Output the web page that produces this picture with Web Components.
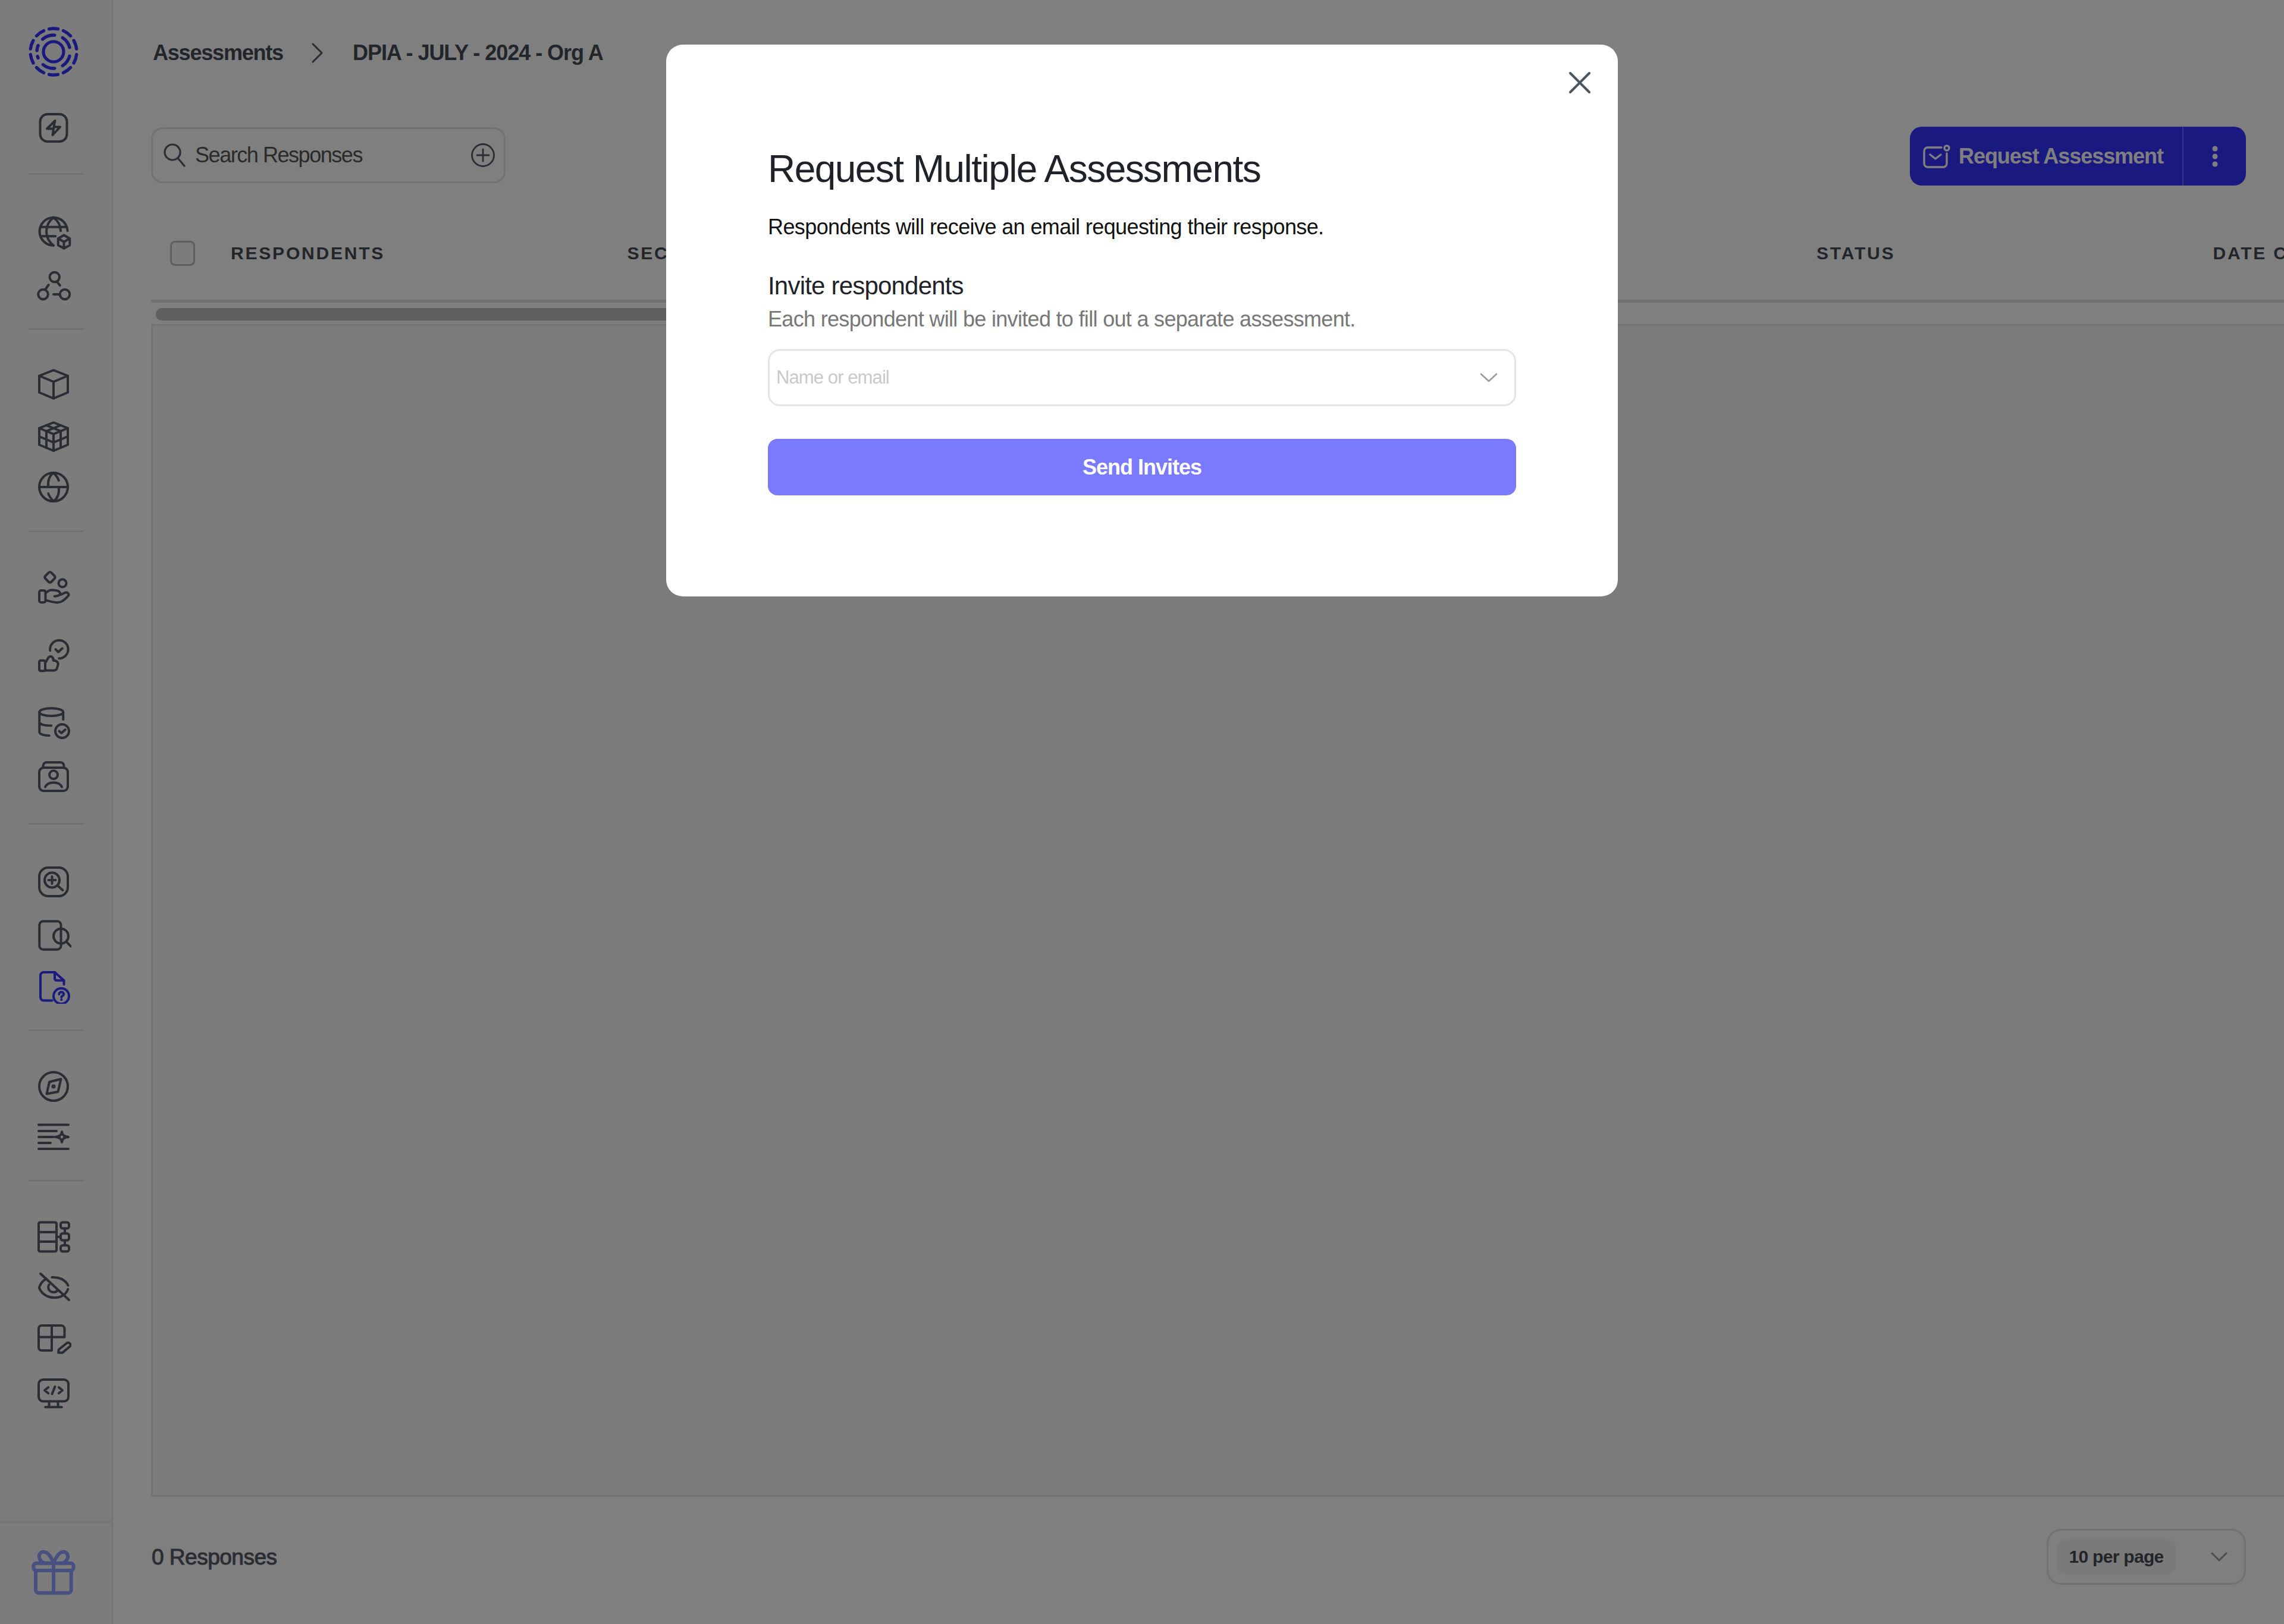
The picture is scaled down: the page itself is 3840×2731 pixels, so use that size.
<!DOCTYPE html>
<html><head><meta charset="utf-8"><title>Assessments</title>
<style>
html,body{margin:0;padding:0;background:#fff}
body{width:3840px;height:2731px;overflow:hidden;font-family:"Liberation Sans",Arial,sans-serif;color:#454a54}
</style></head><body>
<app-shell>
  <side-bar></side-bar>
  <main-pane>
    <crumb-bar></crumb-bar>
    <tool-bar></tool-bar>
    <table-head></table-head>
    <table-scroll></table-scroll>
    <table-panel></table-panel>
    <list-footer></list-footer>
  </main-pane>
</app-shell>
<modal-overlay>
  <modal-dialog></modal-dialog>
</modal-overlay>
<script>
const ICONS={
bolt:'<rect x="3" y="2.8" width="18" height="18.4" rx="5"/><path d="M13 7.2 7.6 12.6h4.4l-.6 4.2 5-5.4h-4.2z"/>',
globebox:'<path d="M21.400 11.200A9.400 9.400 0 1 0 12 21.100"/><path d="M12 2.300C8.500 5 7.200 8.300 7.200 11.700s1.300 6.700 4.800 9.400"/><path d="M12 2.300c3.500 2.700 4.800 6 4.800 9"/><path d="M3.300 8.700h17.400M3.300 14.900h10"/><path d="M19 14.200l3.900 2.200v4.500L19 23.100l-3.900-2.200v-4.500zM15.100 16.400 19 18.700l3.900-2.300M19 18.700v4.400"/>',
nodes:'<circle cx="12.700" cy="6" r="3.300"/><circle cx="5" cy="17.600" r="3.300"/><circle cx="19.600" cy="17.600" r="3.300"/><path d="M14.700 9.600l1.600 2M6.700 14l2-2.800M12 17.600h3.700"/>',
cube:'<path d="M12 2.600 21.600 6.400v11.200L12 21.600 2.400 17.600V6.400z"/><path d="M2.400 6.400 12 10.400l9.600-4M12 10.400v11.200"/>',
cubes:'<path d="M12 2.600 21.600 6.400v11.200L12 21.600 2.400 17.600V6.400z"/><path d="M2.400 6.400 12 10.400l9.600-4M12 10.400v11.200M7.200 4.500l9.600 3.900M16.800 4.500 7.200 8.400M2.400 12 12 16l9.600-4M7.200 8.400v11.200M16.800 8.400v11.200"/>',
globe2:'<circle cx="12" cy="12" r="9.600"/><path d="M2.400 12h19.200M12 2.400c-3 2.200-4 5.600-3.500 9.600M12 2.400c2 2 3 3.600 3.500 5.200M12 21.600c3-2.200 4-5.600 3.500-9.600M12 21.600c-2-2-3-3.600-3.500-5.200"/>',
hands:'<rect x="2.400" y="14.400" width="4.200" height="8" rx="1.200"/><path d="M6.700 16c1.500-1.200 2.500-1.900 4-1.900 2 0 4 .3 5 1 1 .8 1 2-.2 2.600-.8.4-1.800.6-2.800.6"/><path d="M6.700 21c2.500.5 5 1.500 8 1.500 3 0 5.500-2.500 7.200-4.500.8-1-.3-2.600-2-2.200l-3.200 1.500"/><path d="M8.600 2.500c.6-.6 1.400-.6 2 0l2 2c.6.6.6 1.400 0 2l-2 2c-.6.6-1.400.6-2 0l-2-2c-.6-.6-.6-1.400 0-2z"/><circle cx="18" cy="9.500" r="2.600"/>',
thumb:'<rect x="2.400" y="15.500" width="4" height="7" rx="1"/><path d="M6.400 17c1.200-1 1.500-3.300 2.800-4.100 1.500-.6 3 .8 2.600 2.600 1.500 0 3.300.4 3.300 2.600l-.8 2.600c-.3 1-1 1.500-2 1.500H6.400"/><path d="M9.700 8.800A6.100 6.100 0 1 1 15.700 14.100"/><path d="M13.400 8l1.800 1.800 2.700-2.500"/>',
db:'<ellipse cx="10.500" cy="5" rx="8" ry="2.600"/><path d="M2.500 5v13.400c0 1.400 3 2.400 6.600 2.400M2.500 11.600c0 1.500 3 2.500 8 2.500M18.500 5v5"/><circle cx="17.800" cy="17.800" r="4.600"/><path d="M15.800 17.800l1.500 1.300 2.600-2.300"/>',
contact:'<rect x="2.400" y="6" width="19.200" height="15.600" rx="3"/><path d="M5 6V5c0-1.600 1-2.600 2.500-2.600h9C18 2.400 19 3.400 19 5v1"/><circle cx="12" cy="10.800" r="2.800"/><path d="M6.400 19c1-2.400 3-3 5.600-3s4.600.6 5.600 3"/>',
zoomp:'<rect x="2.400" y="2.400" width="19.200" height="19.200" rx="6"/><circle cx="11" cy="10.800" r="5"/><path d="M11 8.400v4.800M8.600 10.800h4.800M14.800 14.600l3.400 3"/>',
docsearch:'<path d="M17 7.400V5a2.500 2.500 0 0 0-2.500-2.500H5A2.500 2.500 0 0 0 2.500 5v14A2.500 2.500 0 0 0 5 21.500h9.500A2.500 2.500 0 0 0 17 19v-1.600"/><circle cx="17" cy="12.500" r="5"/><path d="M17 7.500v10M20.600 16.200l3 3.200"/>',
docq:'<path d="M11 21.800H5.500c-1.500 0-2.300-1-2.300-2.300V5.100c0-1.300.8-2.300 2.300-2.300h7.300L19 8.300v2.700"/><path d="M12.800 2.800v4c0 1 .5 1.500 1.500 1.500H19"/><circle cx="17.200" cy="18.800" r="5.200"/><path d="M15.700 17.600c0-2 3.200-2 3.200 0 0 1-1.600 1-1.600 2M17.300 21.200v.1"/>',
compass:'<circle cx="12" cy="12" r="9.600"/><path d="M9.200 9 17 7l-2 8.600L7.400 17z"/><circle cx="12" cy="12" r=".6"/>',
list:'<path d="M2 3.800h20M2 8h12M2 12h10M2 16h8M2 20h20"/><path d="M17.600 8.500c.3 2.200 1.300 3.200 4.400 3.500-3.100.3-4.100 1.300-4.400 3.500-.3-2.200-1.300-3.200-4.400-3.500 3.100-.3 4.100-1.300 4.400-3.500z"/>',
dbtree:'<rect x="2" y="2.200" width="12" height="19.600" rx="1"/><path d="M2 8.800h12M2 15.200h12M14 12h2.800"/><rect x="16.800" y="2.200" width="5.600" height="4.100" rx="1.400"/><rect x="16.800" y="9.700" width="5.600" height="4.600" rx="1.400"/><rect x="16.800" y="17.700" width="5.600" height="4.100" rx="1.400"/><path d="M19.600 6.300v3.400M19.600 14.300v3.400"/>',
eyeoff:'<path d="M7 7C4.500 8.500 3 10.500 2.300 13c3.500 9 17 8.500 19.400 1M11 6c4.500-.3 9 1.500 10.800 5.500"/><path d="M9 11c-1.500 2.500.5 5 3 5 1 0 2-.3 2.500-1"/><path d="M3.200 3.500 22.400 21.200"/>',
tablepen:'<path d="M2 10.600V4.800a2 2 0 0 1 2-2h13a2.400 2.400 0 0 1 2.400 2.400v5.400zM2 10.600v7a2 2 0 0 0 2 2h6.800V2.800"/><path d="M15.500 19 21 14.600c.8-.5 1.500-.3 2.200.5.6.8.3 1.300-.2 1.800l-5 4.200h-2.800z"/>',
monitor:'<rect x="2" y="2.800" width="20" height="14.600" rx="3"/><path d="M9 17.500v3.500M15 17.500v3.500M6.500 21.300h11M8.500 8 6 10l2.500 2M15.500 8 18 10l-2.500 2M13 7.500 11 12.500"/>'
};
function svg(n,size,color,sw){return `<svg xmlns="http://www.w3.org/2000/svg" width="${size}" height="${size}" viewBox="0 0 24 24" fill="none" stroke="${color}" stroke-width="${sw||1.6}" stroke-linecap="round" stroke-linejoin="round">${ICONS[n]}</svg>`}
function arc(r,a1,a2){const c=42,p=a=>[(c+r*Math.cos(a*Math.PI/180)).toFixed(2),(c-r*Math.sin(a*Math.PI/180)).toFixed(2)];const [x1,y1]=p(a1),[x2,y2]=p(a2);return `M${x1} ${y1}A${r} ${r} 0 0 1 ${x2} ${y2}`}
const logoPaths=[];
for(let i=0;i<10;i++){const m=90-36*i;logoPaths.push(arc(39,m+11,m-11))}
[[131,86],[57,15],[-15,-57],[-86,-129],[-158,-164],[176,158]].forEach(([a,b])=>{
  logoPaths.push(arc(28,a,b))
});
class Base extends HTMLElement{
  constructor(){super();this.attachShadow({mode:'open'}).innerHTML=this.constructor.html}
}
function def(name,html){customElements.define(name,class extends Base{static get html(){return html}})}

def('app-shell',`<style>:host{display:flex;width:3840px;height:2731px;overflow:hidden}</style><slot></slot>`);

customElements.define('nav-icon',class extends HTMLElement{
  constructor(){super();const s=this.attachShadow({mode:'open'});
    const c=this.getAttribute('color')||'#555a66';
    s.innerHTML=`<style>:host{display:flex;width:60px;height:60px;margin-left:60px;flex:none}svg{display:block}</style>`+svg(this.getAttribute('name'),60,c);
  }
});
customElements.define('nav-rule',class extends HTMLElement{
  constructor(){super();this.attachShadow({mode:'open'}).innerHTML=`<style>:host{display:block;width:93px;height:3px;margin-left:48px;background:#e2e2e2;flex:none}</style>`}
});

const G=(n,m,c)=>`<nav-icon name="${n}" style="margin-top:${m}px"${c?` color="${c}"`:''}></nav-icon>`;
const R=m=>`<nav-rule style="margin-top:${m}px"></nav-rule>`;
def('side-bar',`<style>
:host{display:flex;flex-direction:column;width:190px;height:2731px;box-sizing:border-box;background:#f9f9f9;border-right:3px solid #ececec;flex:none;padding-top:45px}
.logo{margin-left:48px;width:84px;height:84px;display:block;flex:none}
.foot{margin-top:auto;height:173px;box-sizing:border-box;border-top:3px solid #eaeaea;display:flex;padding:43px 0 0 48px}
.foot svg{display:block}
</style>
<svg class="logo" viewBox="0 0 84 84" fill="none" stroke="#3333ff">
<path d="${logoPaths.join('')}" stroke-width="5.400" stroke-linecap="round"/>
<circle cx="42" cy="42" r="17" stroke-width="5.200"/>
</svg>`
+G('bolt',56)+R(46)+G('globebox',66)+G('nodes',31)+R(41)+G('cube',61)+G('cubes',28)+G('globe2',25)+R(43)
+G('hands',62)+G('thumb',55)+G('db',53)+G('contact',31)+R(48)+G('zoomp',66)+G('docsearch',30)+G('docq',25,'#3636ff')+R(43)
+G('compass',63)+G('list',25)+R(42)+G('dbtree',63)+G('eyeoff',23)+G('tablepen',29)+G('monitor',31)
+`<div class="foot"><svg width="84" height="84" viewBox="0 0 84 84" fill="none" stroke="#8ea0ff" stroke-width="6" stroke-linecap="round" stroke-linejoin="round"><rect x="8.300" y="24.700" width="67.400" height="12.300" rx="5"/><path d="M12 37v32.700a5 5 0 0 0 5 5h49.700a5 5 0 0 0 5-5V37M42 24.700v50M42 24.700C38 14 32 5.700 25 5.700 19 5.700 16 12 19 18c2 4 6 6.700 11 6.700M42 24.700C46 14 52 5.700 59 5.700c6 0 9 6.300 6 12.300-2 4-6 6.700-11 6.700"/></svg></div>`);

def('main-pane',`<style>:host{display:flex;flex-direction:column;flex:1;min-width:0;height:2731px;overflow:hidden;padding-left:64px;box-sizing:border-box}</style><slot></slot>`);

def('crumb-bar',`<style>
:host{display:flex;align-items:center;height:178px;flex:none;font:700 36px/1 "Liberation Sans",Arial,sans-serif;color:#454a54;padding-left:3px}
.a{letter-spacing:-1.200px}.b{letter-spacing:-1.030px}
svg{margin:0 48px 0 47px;display:block}
</style><span class="a">Assessments</span><svg width="22" height="34" viewBox="0 0 22 34" fill="none" stroke="#555a66" stroke-width="3" stroke-linecap="round" stroke-linejoin="round"><path d="M3 2 18 17 3 32"/></svg><span class="b">DPIA - JULY - 2024 - Org A</span>`);

def('search-box',`<style>
:host{display:flex;align-items:center;box-sizing:border-box;width:596px;height:94px;border:3px solid #e4e4e4;border-radius:20px;padding:0 14px 0 17px;margin-top:1px}
span{font:400 36px/1 "Liberation Sans",Arial,sans-serif;letter-spacing:-1.450px;color:#555;margin-left:16px;flex:1}
svg{display:block;flex:none}
</style><svg width="38" height="42" viewBox="0 0 38 42" fill="none" stroke="#555a66" stroke-width="3.200" stroke-linecap="round"><circle cx="16" cy="16" r="13"/><path d="M25 26l11 13"/></svg><span>Search Responses</span><svg width="42" height="42" viewBox="0 0 42 42" fill="none" stroke="#555a66" stroke-width="2.800" stroke-linecap="round"><circle cx="21" cy="21" r="18.500"/><path d="M21 11v20M11 21h20"/></svg>`);

def('request-button',`<style>
:host{display:flex;align-items:center;box-sizing:border-box;width:565px;height:99px;background:#3333ff;border-radius:20px;color:#fff;font:700 36px/1 "Liberation Sans",Arial,sans-serif;flex:none}
.m{display:flex;align-items:center;width:460px;height:100%;box-sizing:border-box;padding-left:22px;border-right:2px solid #6a6aff}
.m span{letter-spacing:-1.050px;margin-left:14px}
.k{flex:1;display:flex;justify-content:center}
svg{display:block}
</style><div class="m"><svg width="46" height="40" viewBox="0 0 46 40" fill="none" stroke="#fff" stroke-width="3.400" stroke-linecap="round" stroke-linejoin="round"><path d="M31 5H8a6 6 0 0 0-6 6v21a6 6 0 0 0 6 6h26a6 6 0 0 0 6-6V15"/><path d="M12 17l9 7 9-7"/><circle cx="40" cy="6" r="4"/></svg><span>Request Assessment</span></div><div class="k"><svg width="12" height="38" viewBox="0 0 12 38" fill="#fff"><circle cx="6" cy="6" r="4.500"/><circle cx="6" cy="19" r="4.500"/><circle cx="6" cy="32" r="4.500"/></svg></div>`);

def('tool-bar',`<style>:host{display:flex;justify-content:space-between;align-items:flex-start;height:99px;padding:35px 64px 0 0;flex:none}</style><search-box></search-box><request-button></request-button>`);

def('table-head',`<style>
:host{display:flex;align-items:center;box-sizing:border-box;height:197px;padding:35px 0 0 32px;border-bottom:5px solid #e0e0e0;flex:none;font:700 30px/1 "Liberation Sans",Arial,sans-serif;letter-spacing:2.800px;color:#454a54;white-space:nowrap}
.c{width:42px;height:42px;box-sizing:border-box;border:3px solid #bdbdbd;border-radius:8px;background:#f8f8f8;margin-right:60px;flex:none}
.h{width:666.500px;flex:none}
</style><div class="c"></div><div class="h">RESPONDENTS</div><div class="h">SEC</div><div class="h"></div><div class="h"></div><div class="h">STATUS</div><div class="h">DATE C</div>`);

def('table-scroll',`<style>:host{display:block;height:36px;box-sizing:border-box;padding-top:9px;flex:none}
div{margin-left:8px;width:1400px;height:21px;border-radius:10px;background:#bfbfbf}</style><div></div>`);

def('table-panel',`<style>:host{display:block;flex:1;min-height:0;box-sizing:border-box;background:#f9f9f9;border:3px solid #e6e6e6;border-right:0}</style>`);

def('per-page',`<style>
:host{display:flex;align-items:center;box-sizing:border-box;width:335px;height:94px;border:3px solid #e4e4e4;border-radius:24px;padding-left:13px}
.p{display:flex;align-items:center;justify-content:center;width:202px;height:62px;border-radius:20px;background:#f5f5f5;font:700 30px/1 "Liberation Sans",Arial,sans-serif;letter-spacing:-.700px;color:#454a54}
svg{display:block;margin-left:58px}
</style><div class="p">10 per page</div><svg width="28" height="16" viewBox="0 0 28 16" fill="none" stroke="#9a9a9a" stroke-width="3" stroke-linecap="round" stroke-linejoin="round"><path d="M2 2l12 12L26 2"/></svg>`);

def('list-footer',`<style>
:host{display:flex;justify-content:space-between;align-items:center;box-sizing:border-box;height:214px;padding:0 64px 12px 1px;flex:none}
span{font:400 37px/1 "Liberation Sans",Arial,sans-serif;letter-spacing:-.500px;color:#555a66;-webkit-text-stroke:1px #555a66}
</style><span>0 Responses</span><per-page></per-page>`);

def('modal-overlay',`<style>:host{position:fixed;inset:0;display:flex;justify-content:center;align-items:flex-start;padding-top:75px;box-sizing:border-box;background:rgba(0,0,0,.5)}</style><slot></slot>`);

def('modal-dialog',`<style>
:host{display:block;position:relative;box-sizing:border-box;width:1600px;height:928px;background:#fff;border-radius:28px;padding:169px 171px 0;font-family:"Liberation Sans",Arial,sans-serif;color:#1f2329}
.x{position:absolute;right:46px;top:46px;display:block}
h2{margin:0;font:400 64px/80px "Liberation Sans",Arial,sans-serif;letter-spacing:-1.550px;color:#1f2329}
p{margin:0;white-space:nowrap}
.s{margin-top:33px;font-size:36px;line-height:50px;letter-spacing:-.600px;color:#111}
.l{margin-top:49px;font-size:42px;line-height:50px;letter-spacing:-.800px;color:#1f2329}
.e{margin-top:8px;font-size:36px;line-height:46px;letter-spacing:-.680px;color:#777}
.i{margin-top:27px;height:96px;box-sizing:border-box;border:3px solid #e5e5e5;border-radius:20px;display:flex;align-items:center;padding:0 28px 0 11px;justify-content:space-between;font-size:31px;letter-spacing:-.900px;color:#c9c9c9}
.i svg{display:block}
.b{margin-top:55px;height:95px;border-radius:16px;background:#7a7aff;color:#fff;display:flex;align-items:center;justify-content:center;font-weight:700;font-size:36px;letter-spacing:-1px}
</style>
<svg class="x" width="36" height="36" viewBox="0 0 36 36" fill="none" stroke="#4c5563" stroke-width="4" stroke-linecap="round"><path d="M2 2l32 32M34 2 2 34"/></svg>
<h2>Request Multiple Assessments</h2>
<p class="s">Respondents will receive an email requesting their response.</p>
<p class="l">Invite respondents</p>
<p class="e">Each respondent will be invited to fill out a separate assessment.</p>
<div class="i"><span>Name or email</span><svg width="30" height="16" viewBox="0 0 30 16" fill="none" stroke="#9a9a9a" stroke-width="2.600" stroke-linecap="round" stroke-linejoin="round"><path d="M2 2l13 12L28 2"/></svg></div>
<div class="b">Send Invites</div>`);
</script>
</body></html>
